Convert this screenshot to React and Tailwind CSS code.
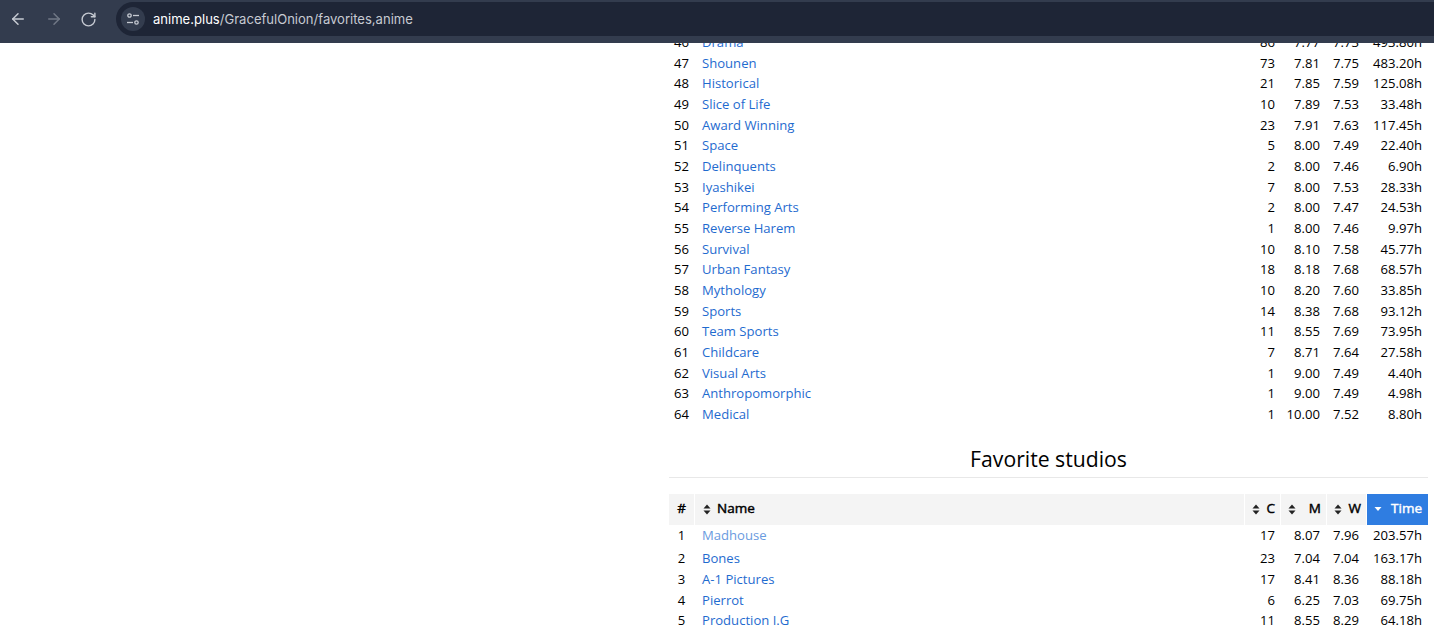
import { ArrowLeft, ArrowRight, RotateCw } from "lucide-react";

const genres = [
  [46, "Drama", 86, "7.77", "7.73", "493.80h"],
  [47, "Shounen", 73, "7.81", "7.75", "483.20h"],
  [48, "Historical", 21, "7.85", "7.59", "125.08h"],
  [49, "Slice of Life", 10, "7.89", "7.53", "33.48h"],
  [50, "Award Winning", 23, "7.91", "7.63", "117.45h"],
  [51, "Space", 5, "8.00", "7.49", "22.40h"],
  [52, "Delinquents", 2, "8.00", "7.46", "6.90h"],
  [53, "Iyashikei", 7, "8.00", "7.53", "28.33h"],
  [54, "Performing Arts", 2, "8.00", "7.47", "24.53h"],
  [55, "Reverse Harem", 1, "8.00", "7.46", "9.97h"],
  [56, "Survival", 10, "8.10", "7.58", "45.77h"],
  [57, "Urban Fantasy", 18, "8.18", "7.68", "68.57h"],
  [58, "Mythology", 10, "8.20", "7.60", "33.85h"],
  [59, "Sports", 14, "8.38", "7.68", "93.12h"],
  [60, "Team Sports", 11, "8.55", "7.69", "73.95h"],
  [61, "Childcare", 7, "8.71", "7.64", "27.58h"],
  [62, "Visual Arts", 1, "9.00", "7.49", "4.40h"],
  [63, "Anthropomorphic", 1, "9.00", "7.49", "4.98h"],
  [64, "Medical", 1, "10.00", "7.52", "8.80h"],
];

const studios = [
  [1, "Madhouse", 17, "8.07", "7.96", "203.57h"],
  [2, "Bones", 23, "7.04", "7.04", "163.17h"],
  [3, "A-1 Pictures", 17, "8.41", "8.36", "88.18h"],
  [4, "Pierrot", 6, "6.25", "7.03", "69.75h"],
  [5, "Production I.G", 11, "8.55", "8.29", "64.18h"],
];

const cols = "grid grid-cols-[26px_550px_36px_46px_40px_61px]";
const boldText = "text-[13.5px] [-webkit-text-stroke:0.45px_currentColor]";

// little up/down triangles in the header cells
const SortIcon = () => (
  <svg width="8" height="11" viewBox="0 0 8 11" className="shrink-0">
    <path d="M4 0.5 L7.5 4.5 H0.5 Z M4 10.5 L0.5 6.5 H7.5 Z" fill="#222" />
  </svg>
);

const HeaderCell = ({ label, wide }) => (
  <div className={`flex items-center bg-[#f4f4f4] border-r border-white pr-[5px] ${wide ? "gap-[6px] pl-[8px]" : "justify-between pl-[7px]"}`}>
    <SortIcon />
    <span className={boldText}>{label}</span>
  </div>
);

const Row = ({ row, tall, hovered }) => (
  <div className={`${cols} items-center ${tall ? "h-[23.9px] pb-[3px]" : "h-[20.67px]"}`}>
    <div className="pr-[1px] text-center">{row[0]}</div>
    <div className="pl-[7px]">
      <a className={hovered ? "text-[#6a9be0]" : "text-[#1f6bcf]"}>{row[1]}</a>
    </div>
    <div className="pr-[6px] text-right">{row[2]}</div>
    <div className="pr-[7px] text-right">{row[3]}</div>
    <div className="pr-[8px] text-right">{row[4]}</div>
    <div className="pr-[6px] text-right">{row[5]}</div>
  </div>
);

const App = () => {
  return (
    <div className="h-[631px] w-[1434px] overflow-hidden bg-white text-[13.1px] leading-none text-black font-['Open_Sans',sans-serif]">
      {/* browser toolbar */}
      <div className="relative z-10 flex h-[43px] items-start bg-[#333c4e]">
        <div className="flex h-[38px] w-[116px] items-center pl-[9px] gap-[18px]">
          <ArrowLeft size={18} strokeWidth={2} className="text-[#c6cad2]" />
          <ArrowRight size={18} strokeWidth={2} className="text-[#717886]" />
          <RotateCw size={17} strokeWidth={2} className="text-[#c6cad2] ml-[-1px]" />
        </div>
        <div className="mt-[2px] flex h-[34px] flex-1 items-center rounded-l-[17px] bg-[#1e2536] pl-[5px]">
          <div className="flex h-[24px] w-[24px] items-center justify-center rounded-full bg-[#333c4e]">
            <svg width="14" height="12" viewBox="0 0 14 12" fill="none" stroke="#c6cad2" strokeWidth="1.3">
              <circle cx="3.5" cy="2.5" r="1.7" />
              <path d="M7 2.5 H13" />
              <path d="M1 9.5 H7" />
              <circle cx="10.5" cy="9.5" r="1.7" />
            </svg>
          </div>
          <div className="ml-[8px] pt-[1px] font-['Inter',sans-serif] text-[13.05px] text-[#c6cad2]">
            <span className="text-white">anime.plus</span>/GracefulOnion/favorites,anime
          </div>
        </div>
      </div>

      {/* page body */}
      <div className="flex pl-[669px]">
        <div className="-mt-[10.75px] w-[759px]">
          {genres.map((row) => (
            <Row key={row[0]} row={row} />
          ))}

          <h2 className="mt-[21px] h-[32px] border-b border-[#e8e8e8] text-center text-[21.2px] leading-[25px]">
            Favorite studios
          </h2>

          <div className={`${cols} mt-[16px] h-[31px]`}>
            <div className={`flex items-center justify-center bg-[#f4f4f4] border-r border-white ${boldText}`}>#</div>
            <HeaderCell label="Name" wide />
            <HeaderCell label="C" />
            <HeaderCell label="M" />
            <HeaderCell label="W" />
            <div className="flex items-center justify-between bg-[#2f7de1] pl-[7px] pr-[6px] text-white">
              <svg width="8" height="4" viewBox="0 0 8 4">
                <path d="M0.5 0 H7.5 L4 4 Z" fill="#fff" />
              </svg>
              <span className={boldText}>Time</span>
            </div>
          </div>

          {studios.map((row, i) => (
            <Row key={row[0]} row={row} tall={i === 0} hovered={i === 0} />
          ))}
        </div>
      </div>
    </div>
  );
};

export default App;
